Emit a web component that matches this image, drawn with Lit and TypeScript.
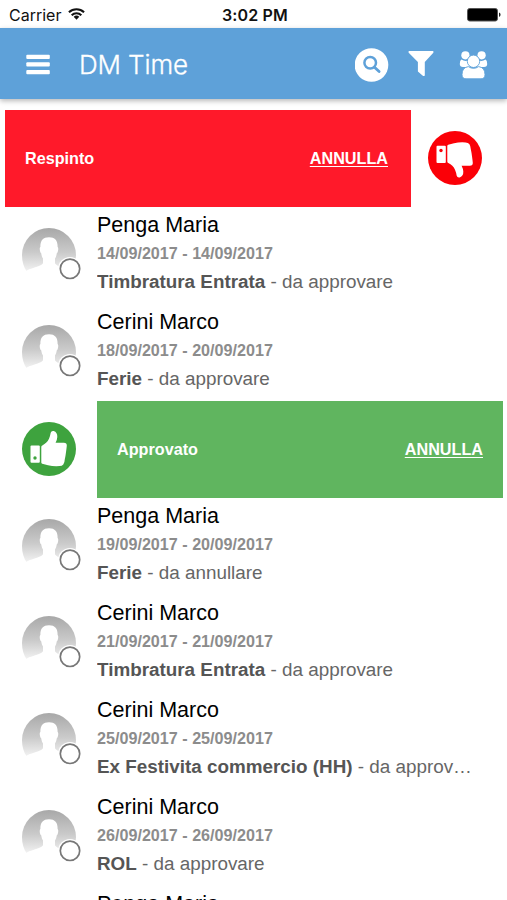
import { LitElement, html, css, svg } from "lit";
import { customElement, property } from "lit/decorators.js";

interface Entry {
  kind: "request" | "approved" | "rejected";
  name?: string;
  dates?: string;
  type?: string;
  status?: string;
}

const ENTRIES: Entry[] = [
  { kind: "rejected" },
  { kind: "request", name: "Penga Maria", dates: "14/09/2017 - 14/09/2017", type: "Timbratura Entrata", status: "da approvare" },
  { kind: "request", name: "Cerini Marco", dates: "18/09/2017 - 20/09/2017", type: "Ferie", status: "da approvare" },
  { kind: "approved" },
  { kind: "request", name: "Penga Maria", dates: "19/09/2017 - 20/09/2017", type: "Ferie", status: "da annullare" },
  { kind: "request", name: "Cerini Marco", dates: "21/09/2017 - 21/09/2017", type: "Timbratura Entrata", status: "da approvare" },
  { kind: "request", name: "Cerini Marco", dates: "25/09/2017 - 25/09/2017", type: "Ex Festivita commercio (HH)", status: "da approvare" },
  { kind: "request", name: "Cerini Marco", dates: "26/09/2017 - 26/09/2017", type: "ROL", status: "da approvare" },
  { kind: "request", name: "Penga Maria" },
];

@customElement("status-bar")
export class StatusBar extends LitElement {
  static styles = css`
    :host { display: grid; grid-template-columns: 1fr auto 1fr; align-items: center; height: 28px; box-sizing: border-box; padding: 2px 6px 0 9px; background: #fff; color: #111; font: 16px/20px Inter, sans-serif; }
    .left { display: flex; align-items: center; gap: 7px; }
    .time { font-weight: 600; letter-spacing: 0.15px; }
    .right { justify-self: end; display: flex; }
    svg { display: block; }
    .wifi { margin-top: -2px; }
  `;
  render() {
    return html`
      <div class="left">
        <span class="carrier">Carrier</span>
        <svg class="wifi" width="17" height="14" viewBox="0 0 18 14" fill="none" stroke="#111" stroke-width="2.2">
          <path d="M1 5.1a11.6 11.6 0 0 1 16 0M3.9 8.2a7.3 7.3 0 0 1 10.2 0" />
          <path d="M9 13 6 10a4.3 4.3 0 0 1 6 0z" fill="#111" stroke="none" />
        </svg>
      </div>
      <span class="time">3:02 PM</span>
      <div class="right">
        <svg width="34" height="14" viewBox="0 0 34 14">
          <rect x=".5" y=".5" width="30" height="12.5" rx="2.2" fill="#000" stroke="#555" />
          <path d="M32 4.6q1.6.6 1.6 2.2T32 9z" fill="#222" />
        </svg>
      </div>
    `;
  }
}

@customElement("top-bar")
export class TopBar extends LitElement {
  static styles = css`
    :host { display: flex; align-items: center; height: 71px; box-sizing: border-box; padding: 2px 19px 0 26px; background: #5ea1d9; color: #fff; box-shadow: 0 2px 5px rgba(0, 0, 0, 0.28); }
    .title { flex: 1; margin-left: 28px; font: 300 26px/34px Inter, sans-serif; letter-spacing: -0.1px; -webkit-text-stroke: 0.3px #fff; }
    svg { display: block; }
    .search { margin-right: 19px; }
    .filter { margin-right: 25px; margin-top: -1px; }
  `;
  render() {
    return html`
      <svg width="25" height="22" viewBox="0 0 25 22" fill="#fff">
        <rect x=".3" y=".8" width="23.500" height="4.200" rx="1" /><rect x=".3" y="8.300" width="23.500" height="4.200" rx="1" /><rect x=".3" y="16" width="23.500" height="4.200" rx="1" />
      </svg>
      <span class="title">DM Time</span>
      <svg class="search" width="34" height="34" viewBox="0 0 34 34" fill="none">
        <circle cx="16.500" cy="17" r="16.800" fill="#fff" />
        <circle cx="15.200" cy="14.800" r="5.800" stroke="#5ea1d9" stroke-width="2.500" />
        <path d="m19.500 19.200 4.600 4.400" stroke="#5ea1d9" stroke-width="2.800" stroke-linecap="round" />
      </svg>
      <svg class="filter" width="26" height="28" viewBox="0 0 26 28" fill="#fff">
        <path d="M1 1h24q1 .8.3 1.800L16.800 12v13.200q-.4 1.300-1.700.7l-5.200-4.500V12L.7 2.800Q0 1.600 1 1z" />
      </svg>
      <svg width="29" height="28" viewBox="0 0 29 28" fill="#fff">
        <circle cx="6.400" cy="4.300" r="4.100" /><circle cx="22.600" cy="4.300" r="4.100" />
        <path d="M2.400 8.600q4 2.600 7.400.4 0 4.500 1 7H4Q.8 16 .8 13q0-3.500 1.600-4.400zM26.600 8.600q-4 2.600-7.400.4 0 4.500-1 7H25q3.200 0 3.200-3 0-3.500-1.600-4.400z" />
        <circle cx="14.500" cy="10.300" r="6.200" stroke="#5ea1d9" stroke-width=".9" />
        <path d="M9.300 15.600q5.200 3.500 10.400 0 6.300 1 6.300 8 0 4.200-4 4.200H7q-4 0-4-4.200 0-7 6.300-8z" stroke="#5ea1d9" stroke-width=".9" />
      </svg>
    `;
  }
}

const thumb = svg`
  <rect x="8.500" y="23.500" width="9.300" height="17.300" rx="1" />
  <path d="M19.300 25q0-1.200 1-1.600 4.700-2.200 6.700-6.600 1.200-2.800 1.700-6 .6-2.200 3-1.700 3.800 1.300 3.600 5.900-.2 3-1.700 5.800h8.200q3.200 0 3 2.900-.3 3-.8 6.500-.4 3.500-1.200 7-.2 3.600-1.500 5.400-1.300 1.500-3.700 1.500-6 .5-11.600-.8l-5.800-1.600q-.9-.3-.9-1.300z" />
`;

@customElement("thumb-badge")
export class ThumbBadge extends LitElement {
  static properties = { down: { type: Boolean } };
  declare down: boolean;
  static styles = css`
    :host { display: block; width: 54px; height: 54px; }
    svg { display: block; }
  `;
  render() {
    return html`<svg width="54" height="54" viewBox="0 0 54 54">
      <circle cx="27" cy="27" r="27" fill=${this.down ? "#fb0007" : "#3ea33e"} />
      <g fill="#fff" transform=${this.down ? "translate(0 55.5) scale(1 -1)" : ""}>${thumb}</g>
      <circle cx="13" cy=${this.down ? 19.5 : 36} r="1.700" fill=${this.down ? "#fb0007" : "#3ea33e"} />
    </svg>`;
  }
}

@customElement("person-avatar")
export class PersonAvatar extends LitElement {
  static styles = css`
    :host { display: block; width: 59px; height: 54px; }
    svg { display: block; }
  `;
  render() {
    return html`<svg width="59" height="54" viewBox="0 0 59 54">
      <defs>
        <linearGradient id="g" x1="0" y1="0" x2="0" y2="1">
          <stop offset="0" stop-color="#a8a8a8" /><stop offset=".55" stop-color="#cacaca" /><stop offset="1" stop-color="#f4f4f4" />
        </linearGradient>
      </defs>
      <path d="M27 0A27 27 0 0 1 54 27Q54 36 48 44H5Q0 37 0 27A27 27 0 0 1 27 0z" fill="url(#g)" />
      <path d="M27 9.300c6 0 8.800 3.300 8.600 9.700 1.300.8.500 5.700-.8 6.300-.4 2.700-1 4-1.800 5.200v4.700c1 2.300 5.500 3.800 9.500 5.300 4 1.800 7 3 8 5v8H3V43.800c2-2.200 6-3.200 9.500-4.400 4.500-1.400 7.500-2.400 8.500-4.200v-4.700c-.8-1.200-1.400-2.500-1.800-5.200-1.300-.6-2.100-5.500-.8-6.300-.2-6.400 2.600-9.700 8.600-9.700z" fill="#fff" />
      <circle cx="48" cy="41" r="12" fill="#fff" />
      <circle cx="48" cy="40.800" r="9.700" fill="#fff" stroke="#777" stroke-width="1.700" />
    </svg>`;
  }
}

@customElement("entry-row")
export class EntryRow extends LitElement {
  @property({ attribute: false }) entry!: Entry;
  static styles = css`
    :host { display: block; height: 97px; }
    .row { display: flex; height: 97px; }
    .request { gap: 16px; padding: 0 32px 0 22px; }
    .request person-avatar { margin-top: 21px; flex: none; }
    .text { min-width: 0; flex: 1; padding-top: 5px; }
    .name { font-size: 21.5px; line-height: 26px; color: #000; }
    .dates { font-size: 16.15px; line-height: 20px; margin-top: 5px; font-weight: 700; color: #8c8c8c; }
    .detail { font-size: 18.85px; line-height: 24px; margin-top: 7px; color: #666; white-space: nowrap; overflow: hidden; text-overflow: ellipsis; }
    .detail b { color: #555; }
    .banner { display: flex; align-items: center; justify-content: space-between; width: 406px; box-sizing: border-box; padding: 0 20px; color: #fff; font-size: 16.2px; font-weight: 700; flex: none; }
    .banner .undo { color: inherit; text-decoration: underline; text-decoration-thickness: 1px; text-underline-offset: 2px; }
    .rejected { padding-left: 5px; gap: 17px; }
    .approved { padding-left: 22px; gap: 21px; }
    .rejected .banner { background: #ff192a; padding-right: 23px; }
    .approved .banner { background: #60b55f; }
    thumb-badge { margin-top: 21px; flex: none; }
  `;
  render() {
    const e = this.entry;
    if (e.kind === "rejected") {
      return html`<div class="row rejected">
        <div class="banner"><span>Respinto</span><a class="undo">ANNULLA</a></div>
        <thumb-badge down></thumb-badge>
      </div>`;
    }
    if (e.kind === "approved") {
      return html`<div class="row approved">
        <thumb-badge></thumb-badge>
        <div class="banner"><span>Approvato</span><a class="undo">ANNULLA</a></div>
      </div>`;
    }
    return html`<div class="row request">
      <person-avatar></person-avatar>
      <div class="text">
        <div class="name">${e.name}</div>
        ${e.dates ? html`<div class="dates">${e.dates}</div>
        <div class="detail"><b>${e.type}</b> - ${e.status}</div>` : ""}
      </div>
    </div>`;
  }
}

@customElement("app-root")
export class AppRoot extends LitElement {
  static styles = css`
    :host { display: flex; flex-direction: column; height: 900px; overflow: hidden; background: #fff; font-family: "Liberation Sans", Arial, sans-serif; }
    status-bar, top-bar { flex: none; }
    .list { flex: 1; min-height: 0; overflow: hidden; margin-top: 11px; }
  `;
  render() {
    return html`
      <status-bar></status-bar>
      <top-bar></top-bar>
      <div class="list">${ENTRIES.map((e) => html`<entry-row .entry=${e}></entry-row>`)}</div>
    `;
  }
}
